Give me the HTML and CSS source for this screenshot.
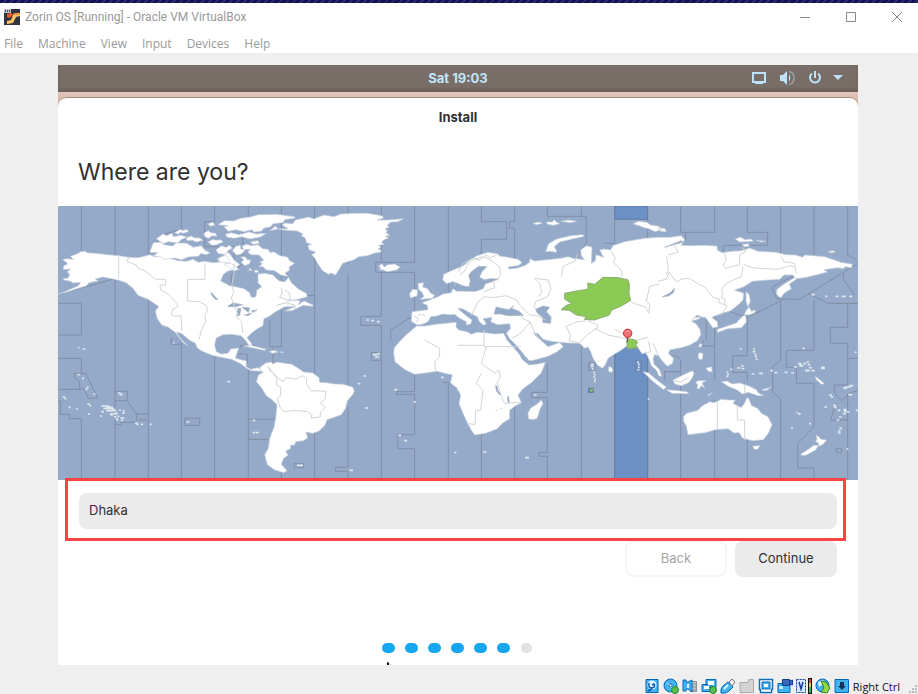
FILE: index.html
```
<!DOCTYPE html>
<html lang="en">
<head>
<meta charset="utf-8">
<title>Zorin OS [Running] - Oracle VM VirtualBox</title>
<link rel="stylesheet" href="styles.css">
</head>
<body>
<div class="desktop-edge"></div>
<header class="titlebar">
  <svg class="app-icon" viewBox="0 0 16 16" aria-hidden="true"><path fill="#303440" d="M0 0h16v16H0z"/><path fill="#bfc3c8" d="M0 0h7v4H0z"/><path fill="#555" d="M1 1h1v2H1zM3 1h1v2H3zM5 1h1v2H5z"/><path fill="#f15a24" d="M3 5l5-1v3L5 9 3 8z"/><path fill="#ffc369" d="M3 15v-3l4-1 2-5 3-2h4v3l-4 1-3 6z"/><path fill="#ff963c" d="M8 6l3-2h5v2h-4z"/></svg>
  <h1 class="window-title">Zorin OS [Running] - Oracle VM VirtualBox</h1>
  <div class="window-controls">
    <button aria-label="Minimize"><svg viewBox="0 0 12 12"><path d="M1 6.500h10"/></svg></button>
    <button aria-label="Maximize"><svg viewBox="0 0 12 12"><path d="M1.500 1.500h9v9h-9z"/></svg></button>
    <button aria-label="Close"><svg viewBox="0 0 12 12"><path d="M1 1l10 10M11 1L1 11"/></svg></button>
  </div>
</header>
<nav class="menubar">
  <button>File</button><button>Machine</button><button>View</button><button>Input</button><button>Devices</button><button>Help</button>
</nav>
<main class="viewport">
  <div class="guest">
    <div class="panel">
      <span></span>
      <time>Sat 19:03</time>
      <div class="tray">
        <svg viewBox="0 0 16 16" aria-hidden="true"><path fill="none" stroke="#bde3fb" stroke-width="2" d="M2 3h12v9H2z"/><path fill="#bde3fb" d="M4 11h8v3H4z"/></svg>
        <svg viewBox="0 0 16 16" aria-hidden="true"><path fill="#bde3fb" d="M1 5h3l4-4v14l-4-4H1zM10 4q2.500 4 0 8z"/><path fill="none" stroke="#9aa0a4" stroke-width="1.500" d="M10 1.500q5 1 5 6.500t-5 6.500"/></svg>
        <svg viewBox="0 0 16 16" aria-hidden="true"><path fill="none" stroke="#bde3fb" stroke-width="2" d="M5 3.500a5 5 0 1 0 6 0M8 1v7"/></svg>
        <svg class="caret" viewBox="0 0 10 6" aria-hidden="true"><path fill="#bde3fb" d="M0 0h10L5 5z"/></svg>
      </div>
    </div>
    <section class="installer">
      <h2 class="dialog-title">Install</h2>
      <h3 class="question">Where are you?</h3>
      <svg class="map" viewBox="0 18 2400 822" preserveAspectRatio="none" role="img" aria-label="World time zone map">
        <path fill="#95a9c9" d="M0 18h2400v822H0z"/>
        <path class="zone" d="M1670 18h99v40h-99zM1670 430h99v410h-99z"/>
        <g class="meridians">
          <path d="M70 18V155M0 310H70V405H0M0 475H70V520M50 520H83L120 595H90L80 568H0M50 520V535L65 545V568M0 602H7V643H35V656H70V840"/>
          <path d="M171 18V165M0 283L171 236V840M171 574H208V602H171M208 602L235 642H271V660H235V642M235 667H190V674H171"/>
          <path d="M271 18V165L310 105L370 88V18M271 300V642M271 660V840M370 420V840M340 412V433H370"/>
          <path d="M470 18V65H440V140H528V190M470 470V840M380 655H425V676H380zM554 50V190L520 225V280M571 18V50M571 500V840M571 658H650M571 718H630"/>
          <path d="M548 445V436H590M530 462H568V490M670 18V250M670 700V840M635 360V440H670V330M645 440V490M770 18V287H745M770 287V530M770 640V840M708 791H737V803H708z"/>
          <path d="M870 18V195M870 220V560M870 620V802H832V814H870V840M970 18V187M1070 18V187H953V217H1070V345L998 390V420M970 217V349H907V376H970V840M970 457H940V482H970"/>
          <path d="M1070 520V575H1016V583H1070V704H1019V746H1070V840M1171 18V275M1171 550V840M1153 547H1175M1270 18V65H1346V118H1270V170M1270 700V840"/>
          <path d="M1370 18V65H1355V85H1370V190M1370 610V840M1468 18V49H1585V130L1555 170M1468 490V577H1420V593H1468V758H1443V769H1468V840M1570 18V49M1570 425V840M1670 58V130H1640M1670 440V840M1769 58V115M1769 455V840"/>
          <path d="M1868 18V97H1970V18M1882 97V120M1868 480V515H1820V540M1845 465L1868 475M1868 515V840M1970 352V438H1935V420M1970 438V540M1970 600V840M2068 18V97H2129V136H1996V160M2068 350V467H2024V517H2068V545M2068 710V840M1945 355V420M1870 343H1930L1995 328L2068 352L2168 303"/>
          <path d="M2168 18V160M2206 228L2142 262L2155 296L2225 298L2400 190M2168 298V480L2144 500V577L2168 595V840M2268 18V165M2268 298V451H2185V502H2215V550H2268V680L2219 730V804H2268V840M2250 280L2310 310H2400M2357 220V240L2390 285M2369 18V165L2393 178M2369 310V382H2317V430H2369V555H2330V580L2350 602L2375 580L2400 570M2369 475H2400M2369 660H2317L2335 608M2369 580V840M2335 745H2350V758H2335z"/>
          <path d="M1592 488H1612V510H1592zM1733 480H1750V515H1733z"/>
        </g>
        <g class="land">
          <!-- North and Central America -->
          <path d="M18 197L30 192 14 178 30 176 46 179 37 169 55 163 68 155 81 154 88 158 110 160 150 164 182 167 212 172 240 173 258 169 275 164 290 170 310 168 330 173 360 182 385 184 405 178 420 187 440 184 465 188 485 186 478 176 500 165 506 155 516 162 528 180 538 188 545 193 535 202 523 210 508 214 495 225 488 243 515 257 535 261 558 266 575 278 578 290 590 293 595 285 596 271 611 260 600 248 600 222 622 220 645 225 662 242 680 246 687 238 692 232 700 248 722 268 745 280 748 290 720 298 688 303 715 300 727 303 720 315 738 303 765 315 765 319 735 316 702 332 680 333 710 320 680 320 655 334 635 348 618 356 614 378 598 386 580 400 567 413 580 430 584 442 577 443 564 422 549 407 522 403 495 404 475 414 470 435 475 455 490 462 510 460 518 447 542 444 537 460 532 474 548 479 565 483 564 500 578 508 600 503 618 516 602 513 580 512 565 505 548 491 520 478 490 472 463 466 433 454 418 444 412 430 395 421 370 400 355 397 368 416 391 438 374 427 353 398 330 381 312 376 298 356 292 333 302 319 288 310 270 298 240 286 225 265 204 248 180 240 154 235 134 231 112 237 120 243 93 248 84 258 60 265 30 275 10 280 0 283 25 273 61 257 68 247 45 249 38 244 18 240 15 235 30 235 35 224 28 215 38 208 15 208z"/>
          <!-- Arctic Archipelago -->
          <path d="M286 128l24-2 7 8 27 4 12-10 30 2 20 12 24-5 10 13 17 9-14 5-14-4-8 9-30 2-20 8-22-5-30 4-12-8-21-2 13-10-24-1zM295 116l20-14 12 5 14-7 6 10 22-4 18 5-18 8-9 10-29-4-15 6zM350 98l17-10 6 4 14-4 4 7-16 5-9-3-5 6zM384 114l16-6 8 5 17 1 10 7-20 5-12-5-15 1zM438 100l12-8 9 6 14 2 3 9-14-2-10 8-12-5zM450 126l15-8 10 3 12-2 9 6-20 9-14 2zM450 72l14-6 6 9-12 4zM480 74l20-12 27 1 20-8 30-4 23-7 55-1 55 7 1 4-31 5-5 9-30 3-7 9-21 5-6 8-22 3-8-7-23 6-25-6-22 5-13-13 12-4zM502 103l18-5 22 6 31-8 22 6 30-2-18 11-31 6-26-7-20 5-22-3zM474 150l16-13 14 5 10-6 10 8-13 7-10 12-20-2zM480 176l22-10 15 15-5 8-25-3zM523 152l9-12 14-5 3 13 15-2-12 15-17 4zM548 170l15 1 5 9 10-1-3 12-14 6-12-10 8-7zM499 192l18-3 17 12 9 7-14 5-15-9z"/>
          <path d="M552 138l14-5 15 4 19-3 14 12 16 2 7 10 10-3 19 12 22 4 8 12 14 7-17 12 2 9-14 8 8 10-20-4-20-13-24-2-10-10-12 1 10-10-8-5 12-5-14-16-24-1-10-8 8-8-20 1zM578 125l22-3 4 8-20 3zM570 205l8 1 4 6-10-1zM588 211l10-1 4 7-10 1z"/>
          <!-- Greenland and Iceland -->
          <path d="M635 92l27-6 28 1-18-13 10-5 22 2 8-11 40-9 15 6 31-12 30 5 20-8 42-2 40 0 44 8 2 7-18 5 34 0 44-4-16 9-22 1-11 11 8 4-14 5 7 6-3 7 10 7-13 3 10 5-16 6-5 9 8 3-17 5 7 5-9 5 10 4-3 6-16 2-23 8-25 3-15 9-34 11-10 17-11 18-14-6-8 4-17-11-14-20-10-18-9-10 12-7-20-8-3-13 11-3-15-5-5-15-12-6 6-5-17-9-34-2-25-4-6-9zM962 200l9-9 8 10 11-7 20-2 16 9-10 9-27 5-17-6-9 1 6-6z"/>
          <!-- South America -->
          <path d="M603 505l18-15 19-4 5 6 12-6 31 5 12 1 15 9 22 15 28 3 18 14 2 14 20 1 27 4 25 1 28 9 4 12-5 10-16 18-5 22-13 20-21 8-22 7-6 17-18 17-19 7-20-4 5 18-13 8-23 3-3 10-13 1 1 10-15 7 7 13-13 9-7 18 17 19-10 6-28-9-21-15-8-30 11-19 4-29 4-12 9-22 6-34 3-34-14-14-18-13-16-26-14-16 6-19 15-10z"/>
          <!-- Europe and Asia -->
          <path d="M1180 278L1155 282 1140 290 1115 300 1092 308 1108 316 1110 329 1062 335 1060 364 1078 375 1095 372 1110 365 1118 350 1136 348 1155 342 1175 344 1190 343 1205 355 1225 365 1225 375 1238 372 1242 360 1228 350 1204 330 1200 324 1215 327 1240 341 1258 350 1264 365 1277 376 1285 371 1275 356 1302 352 1298 365 1318 374 1355 371 1358 385 1345 400 1355 416 1375 436 1397 463 1409 480 1420 482 1440 477 1470 469 1496 456 1516 440 1505 428 1495 431 1470 440 1457 428 1438 412 1426 400 1440 400 1455 418 1480 424 1498 426 1530 429 1565 430 1580 445 1590 441 1598 455 1605 475 1618 495 1633 505 1642 494 1650 475 1665 465 1690 450 1705 439 1738 440 1752 461 1764 458 1774 480 1780 497 1795 510 1803 528 1811 529 1804 508 1788 493 1785 477 1790 464 1802 467 1812 482 1828 499 1844 490 1846 475 1832 461 1835 450 1848 447 1870 443 1896 435 1918 422 1929 403 1925 387 1915 372 1900 363 1920 358 1930 350 1910 353 1902 359 1918 345 1934 352 1942 352 1952 365 1965 384 1980 380 1978 365 1961 352 1990 340 2017 333 2040 315 2055 300 2057 280 2030 270 2058 260 2083 244 2130 240 2165 238 2178 225 2205 225 2212 236 2240 233 2270 226 2309 216 2298 209 2340 203 2355 206 2362 200 2380 203 2383 193 2349 187 2300 170 2240 165 2234 172 2213 165 2184 164 2154 157 2100 154 2075 144 2050 152 2020 154 1992 158 1978 150 1977 138 1940 136 1900 137 1870 136 1880 118 1869 107 1835 112 1800 112 1760 115 1700 125 1665 137 1658 150 1638 147 1625 150 1637 172 1614 164 1612 182 1600 190 1602 142 1585 137 1568 150 1570 168 1580 179 1545 175 1530 170 1508 175 1460 180 1430 183 1415 176 1415 187 1400 197 1375 205 1352 207 1352 200 1380 197 1392 188 1380 178 1350 172 1325 168 1318 161 1290 157 1255 168 1240 178 1215 198 1190 208 1157 223 1154 240 1166 251 1187 244 1195 261 1183 269z"/>
          <path d="M2212 232L2178 252 2157 268 2155 282 2168 294 2178 280 2200 266 2194 252 2215 238zM1055 281l9-13 15 2-2 18-20 5zM1080 250l17-2-3 13 15 5 9 14 12 5-6 10-38 3 12-9-7-13-9-8z"/>
          <path d="M1463 155l9-24 24-14 43-10 35-3 5 5-40 9-34 8-16 14 7 13-2 4-18-3zM1425 70l18-4 10 4-18 4zM1465 66l18 0 6-7 6 7 10 5-18 5-18-3zM1508 64l22-4 26 4-18 4zM1725 72l15-8 27 3 10 8 26 4 7 9-18 7-20-9-18-4-10-5zM1800 83l20 2 5 10-20-2zM2032 117l16-6 12 8 19-2 7 7-26 1-15 1zM2094 121l14 1 14 2-12 2zM2052 134l18-3 4 7-15 2zM2310 155l16-3 6 4-15 2z"/>
          <path d="M2064 275l9 8 4 20-7 18-6-17zM2066 329l8-7 6 12 13-4-3 8-17 7-14-2zM2063 346l2 20-15 17-40 3-20 7-12 5 0-10 24-8 33-11 18-20z"/>
          <!-- Africa and Madagascar -->
          <path d="M1076 378l26 0 38-6 55-5-1 13 8 10 25 5 14 8 15-6 25 1 30 4 26-2 10 20 20 23 17 20 9 16 20 16 27-3 22-5-12 32-30 29-25 18-15 19 10 23-20 11-15 12 0 25-22 14-15 16-35 14-33 5-10-14-12-23-12-26-13-31 5-25-10-21-21-17 6-23-26-6-20-5-34 5-34 4-30-15-28-23-4-24 2-18 20-23 15-15zM1450 600l5 11-9 16-8 28-14 4-13-3-1-17 8-15 20-12zM1652 500l8 2 5 9-5 6-8-3z"/>
          <!-- Oceania -->
          <path d="M1876 650l10-10 34-9 12-13 23-13 10 3 15-4 8-6 24 2 20 0-7 10 24 13 10-12 8-19 7 7 6 17 20 10 10 14 20 10 12 24-11 26-15 19-33 3-30-8-9-16-16 1-18-13-38 3-30 9-52 6-5-25-8-15zM2084 738l22-1-7 11-10 0zM2275 705l7 5 7 8 17 2-11 13-12 6-2-11-8-3 4-7zM2229 762l22-14 17-12 13 1-9 14-29 15-13 0z"/>
          <path d="M1990 545l17-2 16 9 22-3 30 10 20 10 6 10 17 8-19 0-28-10-18 5-16-12-28-12zM1845 540l32-16 26-12 5 7-4 13-12 16-22 9-20-5zM1755 515l17 4 22 19 31 23-8 8-31-24zM1825 569l22 2 40 4 5 6-50-1zM1913 547l8-5 24 0-13 7 8 15-11-7-5 10-7-1 2-12zM1923 458l12 2-2 17-8 2-5-8zM1944 505l16-5 3 15-12-1zM1926 432l7 0-5 10-6-2zM2112 569l20-5 7-5-10 11-15 2zM2272 529l15 12 12 10-9 2-16-15zM1950 585l13-7-11 10zM2213 635l17 7-5 3z"/>
          <path d="M558 438l20-2 48 12-8 3-32-7zM634 455l12-4 15 5-18 4zM668 455l9 1-8 3zM345 427l6 2-5 2z"/>
        </g>
        <g class="specks">
          <path d="M60 443h4m10 4h8m-23 77h6m7 11h6m8 27h6m-10 6h6m18 14h6M14 591h7m-2 5h6m7 26h6m16 5h6m28-15h8m-2 5h6m-10 25h6m30 6h6m-2-30h24m-18 7h25m-16 7h30m-30-10h20m-10 20h20m-15-15h10m-40 8h8m20 10h6m4 5h6m9-20h6m5 2h6m-30 8h9m13-1h8m-22 10h6m9-10h6m-26 17h6m8-2h12m-10 7h6m-20-1h6m50 10h8m-4 3h6m8 0h6m20 0h6M180 579h8m-3 5h9"/>
          <path d="M508 545h8m-130 121h8m190-5h8m-8 37h8m2 0h8M687 314h5m233 46h8m7 2h8m9 3h8m-21 99h14m-7 7h12m-5-10h8m-50 67h8m-25 23h8m14 73h10m90 82h8m10 16h8m-38-153h9m48 37h8m75-74h8m40 36h5m-13 190h6m80-2h10m24-200h6m-3 74h8m6-4h7m68 147h12M1428 585h8M875 811h10m-168-15h18"/>
          <path d="M2045 447h6m34 0h6m-7 8h8m-3 8h6m-4 7h6m-4 8h6m-50 20h8m-6 8h8m-22-2h10m-30 4h6m-18 8h6m-4 7h6m-8 6h6m70-7h8m14-2h12m22-8h8m5 6h8m22-1h8m12 2h8m0-18h8m20-10h8m1-5h8m-4 8h8m-4 9h8m-18 8h12m-30-15h8m8 16h12m7 0h10m20-10h10m-11 3h12m-67-60h6m150 12h6M2220 497m0-6h10m-6 7h12M2360 561h18m-22 4h10m8-8h12m-15 27h12m-70 1h9m-4 6h8m0 25h8m-6 6h8m20 7h10m-8 5h8m-12 7h9m-20 10h8m-12-20h8m-48-10h8m60 15h8m18-5h8m-65 29h8m0 25h8m-12 8h8m-8 6h8m-95-28h6m-60 13h6m160 63h6M2260 284h10m32 5h6m25 0h8m10 0h12m11 0h8m20-3h12m-85-77"/>
          <path d="M1599 493h8m-8 6h8m-5 8h5m-2 10h5m-2 7h5m-7 6h5m-3 7h6m-7 7h6M1737 487h6m-3 7h5m-5 8h5m-7 8h6m25 87h5"/>
        </g>
        <g class="lakes">
          <path d="M1240 215l22-16 24 1-14 15-8 16 13 8 23-3 20 1-18 8-20 6-7 15-24 8-56-1-10-9 8-5-2-12 22 10 20 4 4-18-5-17zM1308 342l6-21 23 5 14 3 17-11-9 6 24 10 13 12-46 1-22-5zM1433 328l22-10 20 4-10 13 14 15-1 20-23-2-2-17-15-12zM1813 290l22-10 15-15-4 13-14 10zM510 318l15-9 29 5-20 6-23 0zM540 325h9l-4 21-9 1zM553 321l22 3-4 13-10-8zM559 345l22-6-10 8zM580 333l17-4-10 8zM460 277l6 7 14 15-8-1-12-14zM1313 558l4 0 3 15 9 9-3 3-11-12zM1348 590h4l2 19-4-2zM1820 142l50-20 5 5-40 10zM565 210l9-8-2 12zM1400 473l10 10-3-10z"/>
        </g>
        <g class="borders">
          <path d="M182 167V236M212 173l-5 12 28 10 5 10 18 6 20 15 15 12h30v17h-17l2 14 23 13 24 28 6 10-17 8-5 15 10 5h20l3 44M441 190V238H389v65l35 2 22 12 2 18-7 8 2 23-12 22-8 30M528 190v34l-7 30 6 20-7 20 5 12 14 35-3 10 15 15 4 34M670 265l3 14-8 12 21 9 11-2-4-20-12-7M655 316l32-8 23 8 2 10-10-14M630 500l6 14 10 5 11 20-3 14 15 10-2 24-9 9 8 25 12 15 30-5 40 4 14 10-2 10 26-4 2-15 14-14-15-12 15-14 2-22-45-2-14-22 1-15-12-8-20 10-30-4-9 12-20-15z"/>
          <path d="M1205 225l15-12 10-20 16-15 30-8 22 10 26 20 4 22-10 20M1200 215l16-25 28-15 20 5 20-14 12 7 20-7M1305 238l5 25-33 12M1240 345l20-40 20-15 25 3 40-6 30 13 10 15 30 30 27 3 20 12M1386 343l10 14 22 9-35 38-22 10M1415 365l15 32 22 28M1430 235l40 5 9 25-10 25-36 15-5 15 10 8M1430 235l15 15 6 25-8 15M1510 230l5-30 36-17 9-24M1660 155l12 20-5 12 25 26 0 15-5 5M1522 380l35-15 26-2M1525 380l13 27-5 15 30 7 25-25 30-20 0-10-30-12M1610 385l40 20 50 10 30 8 40-12M1670 388l20 10 22 12M1718 305l15 7 30 10 10 18 2-26-10-10 10-45 30-7M1800 243l25-5 8-22 22 30 20-10 20 0 20 12 25 14 25 30 20 5-3 10 25 10-15 25-12 2M1830 165l30-8-10-20M1826 170l5 42-7 12M2000 160l5 20-10 15 9 10 20-6 21-5 0-30 20-10-15-12M2058 194l30 10 70 4 40-11 13 5 5 20M2170 170l7 15 33 5 1 12M2055 200l-5 30-25 10-20 10-15 20 5 8-5 15 12 5-2 15"/>
          <path d="M1100 420l45 25v23l-15 18 3 25M1285 440l-15 50 12 10 30 20 10-10 5 20-10 18 15 45 8 18 45-5M1278 390v50h110M1200 436h75M1270 520l-15 30 20 20-7 60-15 3-2 40-25-2M1978 608V690M2038 618v42h22v60M2060 555v25M1848 542l20 4 25-14M1760 460l18-5-6-30M1800 465l-15-35M1080 345h22M1068 348l13 7-5 12"/>
        </g>
        <path class="selected" d="M1520 280l40-8 30-4-1-19 21 4 25-21 45 1 29 6 5 12-1 30 5 20-28 17-29 12-7 15-45 15-30-2 6-8-30-5-21-14-25-2 16-13 16-5-21-14zM1706 424l6-8 20 4 8 8-7 4 6 13-11-2-19 4z"/>
        <path fill="#6d92c6" stroke="#61758c" stroke-width="3" d="M1592 565h14v12h-14z"/><path fill="#80c45e" d="M1594 571l5-5h7v5l-7 5z"/>
        <path class="pin-stem" d="M1708 408v18"/><circle cx="1709" cy="400" r="12.500" fill="#ef7174" stroke="#c9242a" stroke-width="3"/><path fill="none" stroke="#ffc5c5" stroke-width="2" d="M1701 397q7-9 15-1"/>
      </svg>
      <form class="location-form">
        <div class="location-frame"><input type="text" aria-label="Location" value="Dhaka"></div>
        <div class="actions"><button type="button" class="back" disabled>Back</button><button type="button" class="continue">Continue</button></div>
      </form>
      <div class="steps" role="img" aria-label="Step 6 of 7"><i></i><i></i><i></i><i></i><i></i><i></i><i class="pending"></i></div>
      <svg class="cursor" viewBox="0 0 6 4" aria-hidden="true"><path fill="#ddd" d="M0 0l5 4H0z"/><path fill="#111" d="M0 1l2 1v2H0z"/></svg>
    </section>
  </div>
</main>
<footer class="statusbar">
  <svg viewBox="0 0 16 16" aria-hidden="true"><path class="blue" d="M2 1.500h12v13H2z"/><circle cx="8" cy="7" r="4.500" fill="#e2f4ff"/><path fill="none" stroke="#0957b4" stroke-width="1.500" d="M5 5q-1 5 3 5 4-1 2-4L8 7M4 13l4-2"/></svg>
  <svg viewBox="0 0 16 16" aria-hidden="true"><circle class="blue" cx="7.500" cy="7.500" r="6.500"/><path fill="#ddf4ff" d="M3 4l4 3 4 5-4-3z"/><circle cx="7.500" cy="7.500" r="1.500" fill="#fff" stroke="#0957b4"/><circle class="green" cx="12" cy="12" r="3.500"/></svg>
  <svg viewBox="0 0 16 16" aria-hidden="true"><path fill="#c2c5c8" stroke="#8e9296" d="M8.500 3.500h6v10h-6zM10 6h4M10 9h4M10 12h4"/><path class="blue" d="M1 2h3v2h2l4-2v12l-4-3H4v2H1z"/><path stroke="#dff5ff" stroke-width="2" d="M6 6v4"/></svg>
  <svg viewBox="0 0 16 16" aria-hidden="true"><path class="blue" d="M5 1.500h10v8H5zM1 6.500h9v7H1z"/><path fill="#fff" d="M7 3h6v4H7zM3 8h5v3H3z"/><circle class="green" cx="12" cy="12" r="3.500"/></svg>
  <svg viewBox="0 0 16 16" aria-hidden="true"><path class="blue" d="M1 15q-1-4 2-7l5-4 5 5-4 4q-3 3-8 2z"/><path fill="#eee" stroke="#737a84" d="M9 4l3-3 3 3-3 4z"/><path stroke="#dff5ff" stroke-width="2" d="M4 11l4-4"/></svg>
  <svg viewBox="0 0 16 16" aria-hidden="true"><path fill="#d3d3d3" stroke="#aaa" d="M1 4.500h8l1-3h4.500v13H1z"/></svg>
  <svg viewBox="0 0 16 16" aria-hidden="true"><path fill="#fff" stroke="#1270b7" stroke-width="1.500" d="M1.500 1.500h13v10h-1v3h-11v-3h-1z"/><path class="blue" d="M4 4h8v7H4z"/><path fill="#fff" d="M6 6h4v3H6z"/></svg>
  <svg viewBox="0 0 16 16" aria-hidden="true"><path class="blue" d="M1 5.500h12v9H1z"/><path fill="#3768be" stroke="#113f8d" d="M5.500 1.500h7v6h-7zM12.500 3l3-1v5l-3-1z"/><path fill="#b7e6ff" d="M2 8h4v3H2z"/></svg>
  <svg viewBox="0 0 16 16" aria-hidden="true"><path fill="#d5eaff" stroke="#153b94" stroke-dasharray="2 1" d="M.500 1.500h9v13h-9z"/><path fill="none" stroke="#153b94" stroke-width="1.500" d="M3 4l2 7 2-7"/><path fill="#111" d="M12 0h4v16h-4z"/><path fill="#d94224" d="M13 1h2v5h-2z"/><path fill="#e5ce36" d="M13 5h2v4h-2z"/><path fill="#31b957" d="M13 9h2v6h-2z"/></svg>
  <svg viewBox="0 0 16 16" aria-hidden="true"><circle class="blue" cx="7.500" cy="7.500" r="6.500"/><path fill="#dff5ff" d="M3 4l5-2 2 3-6 4z"/><path fill="#8fdb42" stroke="#348428" d="M6 3l5 1 4 6-3 5-6-1 3-4z"/></svg>
  <svg viewBox="0 0 16 16" aria-hidden="true"><path class="blue" d="M1 1.500h13.500v13H1z"/><path fill="#12335b" d="M6 4h4v4h2l-4 4-4-4h2z"/></svg>
  <span>Right Ctrl</span>
  <svg class="grip" viewBox="0 0 9 9" aria-hidden="true"><path fill="#bbb" d="M6 0h2v2H6zM3 3h2v2H3zM6 3h2v2H6zM0 6h2v2H0zM3 6h2v2H3zM6 6h2v2H6z"/></svg>
</footer>
</body>
</html>
```
FILE: styles.css
```
* { box-sizing: border-box; }
body { margin: 0; min-height: 100vh; display: flex; flex-direction: column; background: #efefef; font-family: "Open Sans", "Noto Sans", sans-serif; font-size: 12px; color: #999; }
button, input { font: inherit; color: inherit; border: 0; margin: 0; padding: 0; background: none; }
svg { display: block; }
h1, h2, h3 { margin: 0; }
.desktop-edge { height: 3px; background: repeating-linear-gradient(135deg, #10134f 0 3px, #272b70 3px 5px); }
.titlebar { display: flex; align-items: center; height: 30px; padding: 0 10px 2px 4px; background: #fff; }
.app-icon { width: 16px; height: 16px; }
.window-title { margin-left: 5px; font-size: 12px; font-weight: 400; font-family: Roboto, sans-serif; }
.window-controls { display: flex; margin-left: auto; gap: 24px; }
.window-controls button { width: 22px; height: 22px; display: grid; place-items: center; }
.window-controls svg { width: 12px; height: 12px; fill: none; stroke: #888; }
.menubar { height: 20px; display: flex; align-items: center; gap: 15px; padding: 0 4px; background: #fff; }
.viewport { padding: 12px 60px 0 58px; }
.guest { background: linear-gradient(#e4c8bb, #caa99b) 0 27px / 100% 16px no-repeat, #fff; font-family: Inter, sans-serif; font-size: 13px; color: #303030; }
.panel { height: 27px; display: grid; grid-template-columns: 1fr auto 1fr; align-items: center; padding-bottom: 2px; background: #786d67; box-shadow: inset 0 -3px 3px #6d605a; color: #c1e6fb; font-weight: 700; }
.tray { display: flex; justify-content: flex-end; align-items: center; gap: 12px; padding-right: 15px; }
.tray svg { width: 16px; height: 16px; }
.tray .caret { width: 10px; height: 6px; margin-left: -2px; }
.installer { position: relative; height: 568px; margin-top: 5px; background: #fff; border-top: 1px solid #9d8a82; border-radius: 9px 9px 0 0; }
.dialog-title { padding-top: 11px; text-align: center; font-size: 13px; line-height: 16px; font-weight: 700; }
.question { padding: 33px 20px 0; font-size: 23px; line-height: 28px; font-weight: 400; margin-bottom: 20px; }
.map { width: 100%; height: 274px; }
.zone { fill: #6c91c5; stroke: #536b93; stroke-width: 2; }
.meridians { fill: none; stroke: #778194; stroke-width: 3; opacity: .65; }
.land { fill: #fff; stroke: #c4cedb; stroke-width: 2; }
.lakes { fill: #95a9c9; stroke: #a8b3c0; stroke-width: 2; }
.borders { fill: none; stroke: #d0d5d5; stroke-width: 3; }
.specks { fill: none; stroke: #dfe9ef; stroke-width: 5; }
.selected { fill: #8bca55; stroke: #8eab75; stroke-width: 3; }
.pin-stem { stroke: #715553; stroke-width: 4; }
.location-frame { position: relative; margin: -2px 12px 0 7px; padding: 12px 6px 9px 11px; border: 3px solid #fa4343; }
.location-frame input { display: block; width: 100%; height: 36px; padding: 0 10px 2px; border-radius: 8px; background: #ebebeb; }
.actions { display: flex; justify-content: flex-end; gap: 8px; padding-right: 21px; }
.actions button { width: 102px; height: 36px; padding-bottom: 2px; border-radius: 8px; }
.actions .back { border: 2px solid #f5f5f5; color: #a5a5a5; }
.actions .continue { background: #ebebeb; }
.steps { display: flex; justify-content: center; gap: 10px; padding-right: 2px; margin-top: 66px; }
.steps i { width: 13px; height: 10px; border-radius: 5px; background: #15a6ef; }
.steps .pending { width: 11px; margin-left: 1px; background: #dfe3e2; }
.cursor { position: absolute; left: 329px; bottom: 0; width: 6px; height: 4px; }
.statusbar { display: flex; align-items: center; justify-content: flex-end; gap: 3px; height: 16px; margin: 13px 0 0; color: #111; font-size: 11px; }
.statusbar svg { width: 16px; height: 16px; }
.statusbar .blue { fill: #43b3ef; stroke: #0868b8; stroke-width: 1; }
.statusbar .green { fill: #55bd48; stroke: #278b38; }
.statusbar .grip { width: 9px; height: 9px; margin-left: 6px; align-self: flex-end; }
```
